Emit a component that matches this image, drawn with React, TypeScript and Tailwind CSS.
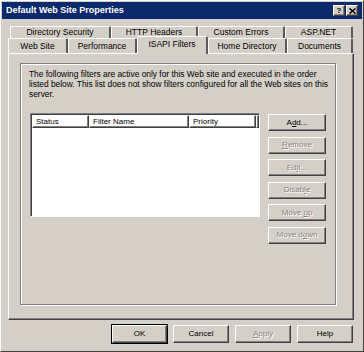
import React from 'react';

const font = "font-['Liberation_Sans',Arial,sans-serif]";

const raised =
  'border-l border-t border-white border-r border-b border-r-[#404040] border-b-[#404040] shadow-[inset_-1px_-1px_0_#808080]';

type BtnProps = {
  label: React.ReactNode;
  disabled?: boolean;
  w?: string;
  h?: string;
  def?: boolean;
};

const Btn = ({ label, disabled, w = 'w-[58px]', h = 'h-[17px]', def }: BtnProps) => (
  <div className={`${w} ${h} ${def ? 'outline outline-1 outline-black' : ''} bg-[#d4d0c8] ${raised} flex items-center justify-center`}>
    <span
      className={`text-[8px] leading-none ${disabled ? 'text-[#8a8784] [text-shadow:1px_1px_0_#ffffff]' : 'text-black'}`}
    >
      {label}
    </span>
  </div>
);

const Tab = ({ label, w, selected }: { label: string; w: string; selected?: boolean }) => (
  <div
    className={`${w} ${
      selected ? 'h-[18px] -mt-[2px] -mb-[1px] relative z-10' : 'h-full'
    } bg-[#d4d0c8] border-l border-t border-white border-r-2 border-r-[#5a5a5a] rounded-tl-[2px] rounded-tr-[2px] flex items-center justify-center`}
  >
    <span className={`text-[8.5px] leading-none text-black ${selected ? '-mt-[2px]' : ''}`}>{label}</span>
  </div>
);

const HeaderCell = ({ label, w }: { label: string; w: string }) => (
  <div className={`${w} h-full ${raised} flex items-center pl-[3px]`}>
    <span className="text-[8px] leading-none text-black">{label}</span>
  </div>
);

export default function App() {
  return (
    <div className={`${font} w-[364px] h-[352px] bg-[#d4d0c8] p-[1px] border border-white border-r-[#404040] border-b-[#404040]`}>
      {/* barre de titre */}
      <div className="h-[17px] bg-[#0b2a6b] flex items-center justify-between pl-[4px] pr-[4px]">
        <span className="text-white font-bold text-[9px] leading-none">Default Web Site Properties</span>
        <div className="flex gap-[1px]">
          <div className={`w-[12px] h-[11px] bg-[#d4d0c8] ${raised} flex items-center justify-center`}>
            <span className="text-[8px] font-bold leading-none text-black">?</span>
          </div>
          <div className={`w-[12px] h-[11px] bg-[#d4d0c8] ${raised} flex items-center justify-center`}>
            <svg width="7" height="6" viewBox="0 0 7 6">
              <path d="M0.5 0.5 L6.5 5.5 M6.5 0.5 L0.5 5.5" stroke="#000" strokeWidth="1.5" />
            </svg>
          </div>
        </div>
      </div>

      {/* onglets */}
      <div className="ml-[6px] mt-[7px] w-[346px]">
        <div className="flex h-[12px] pl-[2px]">
          <Tab label="Directory Security" w="w-[101px]" />
          <Tab label="HTTP Headers" w="w-[87px]" />
          <Tab label="Custom Errors" w="w-[87px]" />
          <Tab label="ASP.NET" w="w-[68px]" />
        </div>
        <div className="flex items-end h-[15px]">
          <Tab label="Web Site" w="w-[60px]" />
          <Tab label="Performance" w="w-[69px]" />
          <Tab label="ISAPI Filters" w="w-[71px]" selected />
          <Tab label="Home Directory" w="w-[79px]" />
          <Tab label="Documents" w="w-[66px]" />
        </div>

        {/* panneau */}
        <div className={`h-[267px] bg-[#d4d0c8] ${raised} pt-[9px] pl-[11px]`}>
          <div className="w-[316px] h-[242px] border border-[#808080] shadow-[1px_1px_0_#ffffff,inset_1px_1px_0_#ffffff] pt-[5px] pl-[8px]">
            <div className="text-[8.4px] leading-[10px] text-black whitespace-nowrap">
              The following filters are active only for this Web site and executed in the order
              <br />
              listed below. This list does not show filters configured for all the Web sites on this
              <br />
              server.
            </div>

            <div className="flex mt-[14px] gap-[8px]">
              <div className="w-[230px] h-[104px] ml-[1px] bg-white border border-[#808080] border-r-white border-b-white shadow-[inset_1px_1px_0_#404040]">
                <div className="flex h-[13px] pl-[1px] pt-[1px] box-content">
                  <HeaderCell label="Status" w="w-[57px]" />
                  <HeaderCell label="Filter Name" w="w-[100px]" />
                  <HeaderCell label="Priority" w="w-[67px]" />
                  <div className={`flex-1 h-full ${raised}`} />
                </div>
              </div>

              <div className="flex flex-col gap-[5.5px] mt-[1px]">
                <Btn label={<>A<u>d</u>d...</>} />
                <Btn label={<><u>R</u>emove</>} disabled />
                <Btn label={<>Ed<u>i</u>t...</>} disabled />
                <Btn label={<>Disab<u>l</u>e</>} disabled />
                <Btn label={<>Move <u>u</u>p</>} disabled />
                <Btn label={<>Move d<u>o</u>wn</>} disabled />
              </div>
            </div>
          </div>
        </div>

        {/* boutons du bas */}
        <div className="flex justify-end gap-[6px] mt-[5px] pr-[1px]">
          <Btn label="OK" w="w-[55px]" h="h-[18px]" def />
          <Btn label="Cancel" w="w-[56px]" h="h-[18px]" />
          <Btn label={<><u>A</u>pply</>} w="w-[56px]" h="h-[18px]" disabled />
          <Btn label="Help" w="w-[56px]" h="h-[18px]" />
        </div>
      </div>
    </div>
  );
}
